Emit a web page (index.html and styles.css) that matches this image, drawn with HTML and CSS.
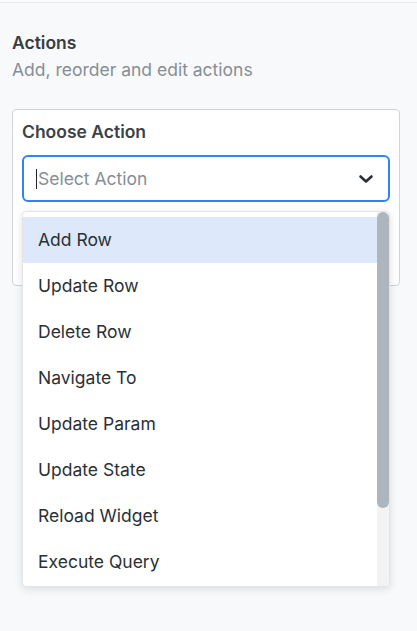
FILE: index.html
```html
<!DOCTYPE html>
<html lang="en">
<head>
    <meta charset="UTF-8">
    <meta name="viewport" content="width=device-width, initial-scale=1.0">
    <title>Actions</title>
    <link rel="stylesheet" href="styles.css">
</head>
<body>

<div class="topbar"></div>

<section class="panel">
    <h3 class="panel-title">Actions</h3>
    <p class="panel-sub">Add, reorder and edit actions</p>

    <div class="card">
        <label class="field-label">Choose Action</label>
        <div class="select-wrap">
            <div class="select">
                <span class="caret"></span>
                <span class="placeholder">Select Action</span>
                <svg class="chevron" width="16" height="16" viewBox="0 0 16 16">
                    <path d="M2.5 5.5 L8 10.5 L13.5 5.5" fill="none" stroke="#2b2f33" stroke-width="2.6" stroke-linecap="round" stroke-linejoin="round"/>
                </svg>
            </div>

            <!-- выпадающий список действий -->
            <div class="menu">
                <ul class="menu-list">
                    <li class="active">Add Row</li>
                    <li>Update Row</li>
                    <li>Delete Row</li>
                    <li>Navigate To</li>
                    <li>Update Param</li>
                    <li>Update State</li>
                    <li>Reload Widget</li>
                    <li>Execute Query</li>
                </ul>
                <div class="scrollbar">
                    <div class="scroll-thumb"></div>
                </div>
            </div>
        </div>
    </div>
</section>

</body>
</html>
```

FILE: styles.css
```css
html, body {
    margin: 0;
    padding: 0;
}
* {
    box-sizing: border-box;
}
body {
    font-family: Inter, "Noto Sans", sans-serif;
    background-color: #f8f9fa;
    color: #212529;
    height: 631px;
    overflow: hidden;
}
.topbar {
    height: 3px;
    background-color: #fbfbfc;
    border-bottom: 1px solid #e9ebed;
}
.panel {
    padding: 29px 17px 0 12px;
}
.panel-title {
    margin: 0;
    font-size: 17.5px;
    font-weight: 600;
    line-height: 22px;
    color: #383d42;
}
.panel-sub {
    margin: 5px 0 0;
    font-size: 17.5px;
    line-height: 22px;
    color: #868e96;
}
.card {
    margin-top: 28px;
    background-color: #fff;
    border: 1px solid #ced4da;
    border-radius: 4px;
    padding: 11px 9px 83px 9px;
}
.field-label {
    display: block;
    font-size: 17.5px;
    font-weight: 600;
    line-height: 22px;
    color: #3c4247;
}
.select-wrap {
    position: relative;
    margin-top: 12px;
}
.select {
    display: flex;
    align-items: center;
    height: 47px;
    border: 2px solid #2f84f5;
    border-radius: 6px;
    padding: 0 14px 0 12px;
}
.caret {
    width: 1px;
    height: 20px;
    background-color: #212529;
    margin-right: 1px;
}
.placeholder {
    flex: 1;
    font-size: 17.5px;
    color: #868e96;
}
.chevron {
    display: block;
}
.menu {
    position: absolute;
    top: 56px;
    left: 0;
    right: 0;
    height: 376px;
    display: flex;
    overflow: hidden;
    background-color: #fff;
    border: 1px solid #e3e6e9;
    border-radius: 4px;
    box-shadow: 0 2px 8px rgba(0, 0, 0, 0.12);
}
.menu-list {
    flex: 1;
    margin: 0;
    padding: 5px 0 0;
    list-style: none;
}
.menu-list li {
    height: 46px;
    line-height: 46px;
    padding-left: 15px;
    font-size: 17.5px;
    color: #2b3035;
}
.menu-list li.active {
    background-color: #dde8fa;
}
.scrollbar {
    width: 12px;
    background-color: #f1f3f5;
}
.scroll-thumb {
    height: 296px;
    background-color: #adb5bd;
    border-radius: 6px;
}
```
